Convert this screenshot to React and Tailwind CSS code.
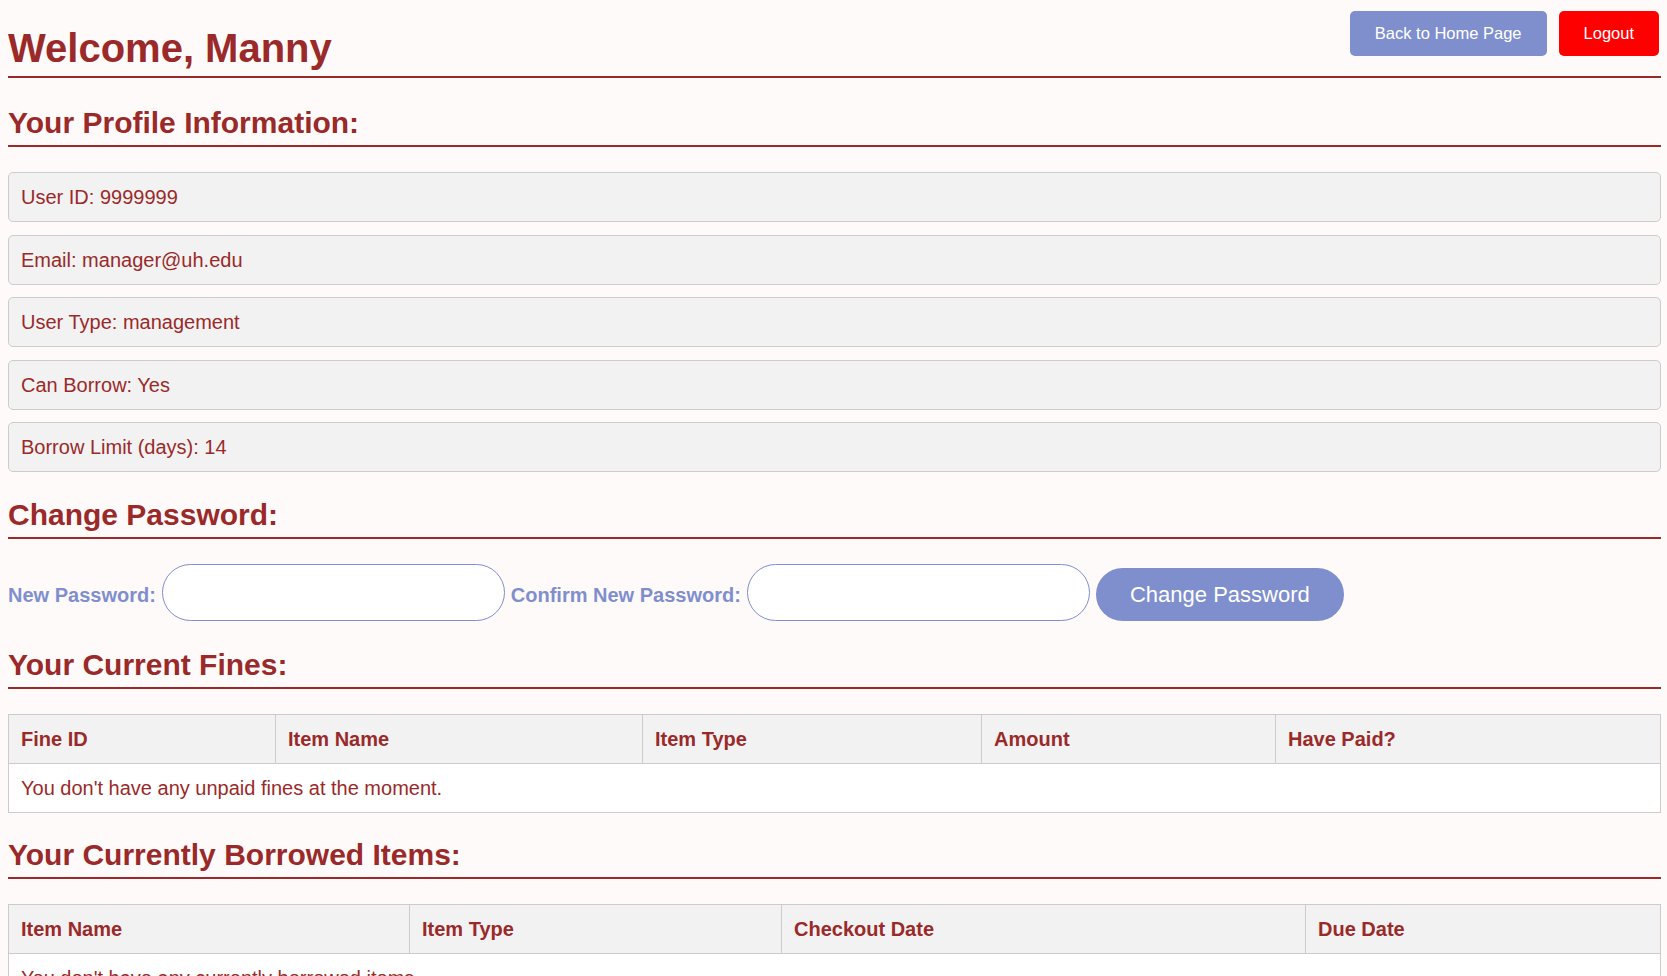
import React from "react";

function H2({ children, mt = "mt-[27px]" }) {
  return (
    <h2
      className={
        mt +
        " border-b-2 border-[#9a2a2a] pb-[5px] text-[30px] font-bold leading-[34px] text-[#9a2a2a]"
      }
    >
      {children}
    </h2>
  );
}

function InfoBox({ children }) {
  return (
    <div className="rounded-[5px] border border-[#cccccc] bg-[#f2f2f2] px-[12px] py-[12px] text-[20px] leading-[24px] text-[#9a2a2a]">
      {children}
    </div>
  );
}

function Table({ cols, empty }) {
  return (
    <table className="mt-[25px] w-full table-fixed border-collapse text-[20px] leading-[24px] text-[#9a2a2a]">
      <thead>
        <tr className="bg-[#f2f2f2]">
          {cols.map((c) => (
            <th
              key={c.label}
              style={c.w ? { width: c.w } : undefined}
              className="border border-[#cccccc] px-[12px] py-[12px] text-left font-bold"
            >
              {c.label}
            </th>
          ))}
        </tr>
      </thead>
      <tbody>
        <tr className="bg-white">
          <td colSpan={cols.length} className="border border-[#cccccc] px-[12px] py-[12px] text-left font-normal">
            {empty}
          </td>
        </tr>
      </tbody>
    </table>
  );
}

export default function App() {
  return (
    <div
      className="min-h-screen bg-[#fffafa] pb-[40px] pl-[8px] pr-[6px] pt-[11px]"
      style={{ fontFamily: '"Liberation Sans", Arial, sans-serif' }}
    >
      <div className="flex items-start justify-between border-b-2 border-[#9a2a2a]">
        <h1 className="pb-[5px] pt-[14px] text-[40px] font-bold leading-[46px] text-[#9a2a2a]">
          Welcome, Manny
        </h1>
        <div className="mr-[2px] flex gap-[12px]">
          <button className="h-[45px] rounded-[5px] bg-[#7f8fcd] px-[25px] text-[16.5px] text-white">
            Back to Home Page
          </button>
          <button className="h-[45px] rounded-[5px] bg-[#ff0000] px-[25px] text-[16.5px] text-white">
            Logout
          </button>
        </div>
      </div>

      <H2 mt="mt-[28px]">Your Profile Information:</H2>
      <div className="mt-[25px] flex flex-col gap-[12.5px]">
        <InfoBox>User ID: 9999999</InfoBox>
        <InfoBox>Email: manager@uh.edu</InfoBox>
        <InfoBox>User Type: management</InfoBox>
        <InfoBox>Can Borrow: Yes</InfoBox>
        <InfoBox>Borrow Limit (days): 14</InfoBox>
      </div>

      <H2 mt="mt-[26px]">Change Password:</H2>
      <div className="mt-[25px] flex h-[57px] items-center gap-[6px]">
        <label className="mt-[6px] text-[20px] font-bold leading-[23px] text-[#7f8fcd]">New Password:</label>
        <input
          type="password"
          className="h-[57px] w-[343px] rounded-full border border-[#7f8fcd] bg-white px-[20px] outline-none"
        />
        <label className="mt-[6px] text-[20px] font-bold leading-[23px] text-[#7f8fcd]">Confirm New Password:</label>
        <input
          type="password"
          className="h-[57px] w-[343px] rounded-full border border-[#7f8fcd] bg-white px-[20px] outline-none"
        />
        <button className="h-[53px] w-[248px] self-end rounded-full bg-[#7f8fcd] text-[22px] text-white">
          Change Password
        </button>
      </div>

      <H2>Your Current Fines:</H2>
      <Table
        cols={[
          { label: "Fine ID", w: "267px" },
          { label: "Item Name", w: "367px" },
          { label: "Item Type", w: "339px" },
          { label: "Amount", w: "294px" },
          { label: "Have Paid?" },
        ]}
        empty="You don't have any unpaid fines at the moment."
      />

      <H2 mt="mt-[25px]">Your Currently Borrowed Items:</H2>
      <Table
        cols={[
          { label: "Item Name", w: "401px" },
          { label: "Item Type", w: "372px" },
          { label: "Checkout Date", w: "524px" },
          { label: "Due Date" },
        ]}
        empty="You don't have any currently borrowed items."
      />
    </div>
  );
}
